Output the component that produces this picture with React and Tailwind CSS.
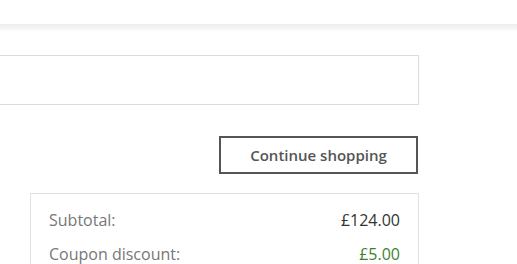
import React from 'react';

const rows = [
  { label: 'Subtotal:', value: '£124.00', tone: 'text-[#333333]' },
  { label: 'Coupon discount:', value: '£5.00', tone: 'text-[#3f7f2f]' },
];

const App = () => {
  return (
    <div className="min-h-screen bg-white overflow-hidden" style={{ fontFamily: '"Open Sans", sans-serif' }}>
      {/* Header strip */}
      <div className="h-[24px] bg-white" />
      <div className="h-[7px] bg-gradient-to-b from-[#ececec] to-[#fbfbfb]" />

      <div className="w-[419px]">
        {/* Coupon field */}
        <div className="mt-[24px] -ml-[2px] h-[50px] border border-[#dcdcdc] bg-white" />

        {/* Continue shopping */}
        <div className="mt-[31px] flex justify-end pr-px">
          <button className="w-[199px] h-[38px] border-2 border-[#555555] text-[15px] font-semibold text-[#555555] bg-white">
            Continue shopping
          </button>
        </div>

        {/* Totals */}
        <div className="mt-[19px] ml-[30px] border border-[#e2e2e2] px-[18px] pt-[16px] pb-4">
          {rows.map((row) => (
            <div key={row.label} className="flex justify-between text-[16px] leading-[20px] h-[34px]">
              <span className="text-[#777777]">{row.label}</span>
              <span className={row.tone}>{row.value}</span>
            </div>
          ))}
        </div>
      </div>
    </div>
  );
};

export default App;
